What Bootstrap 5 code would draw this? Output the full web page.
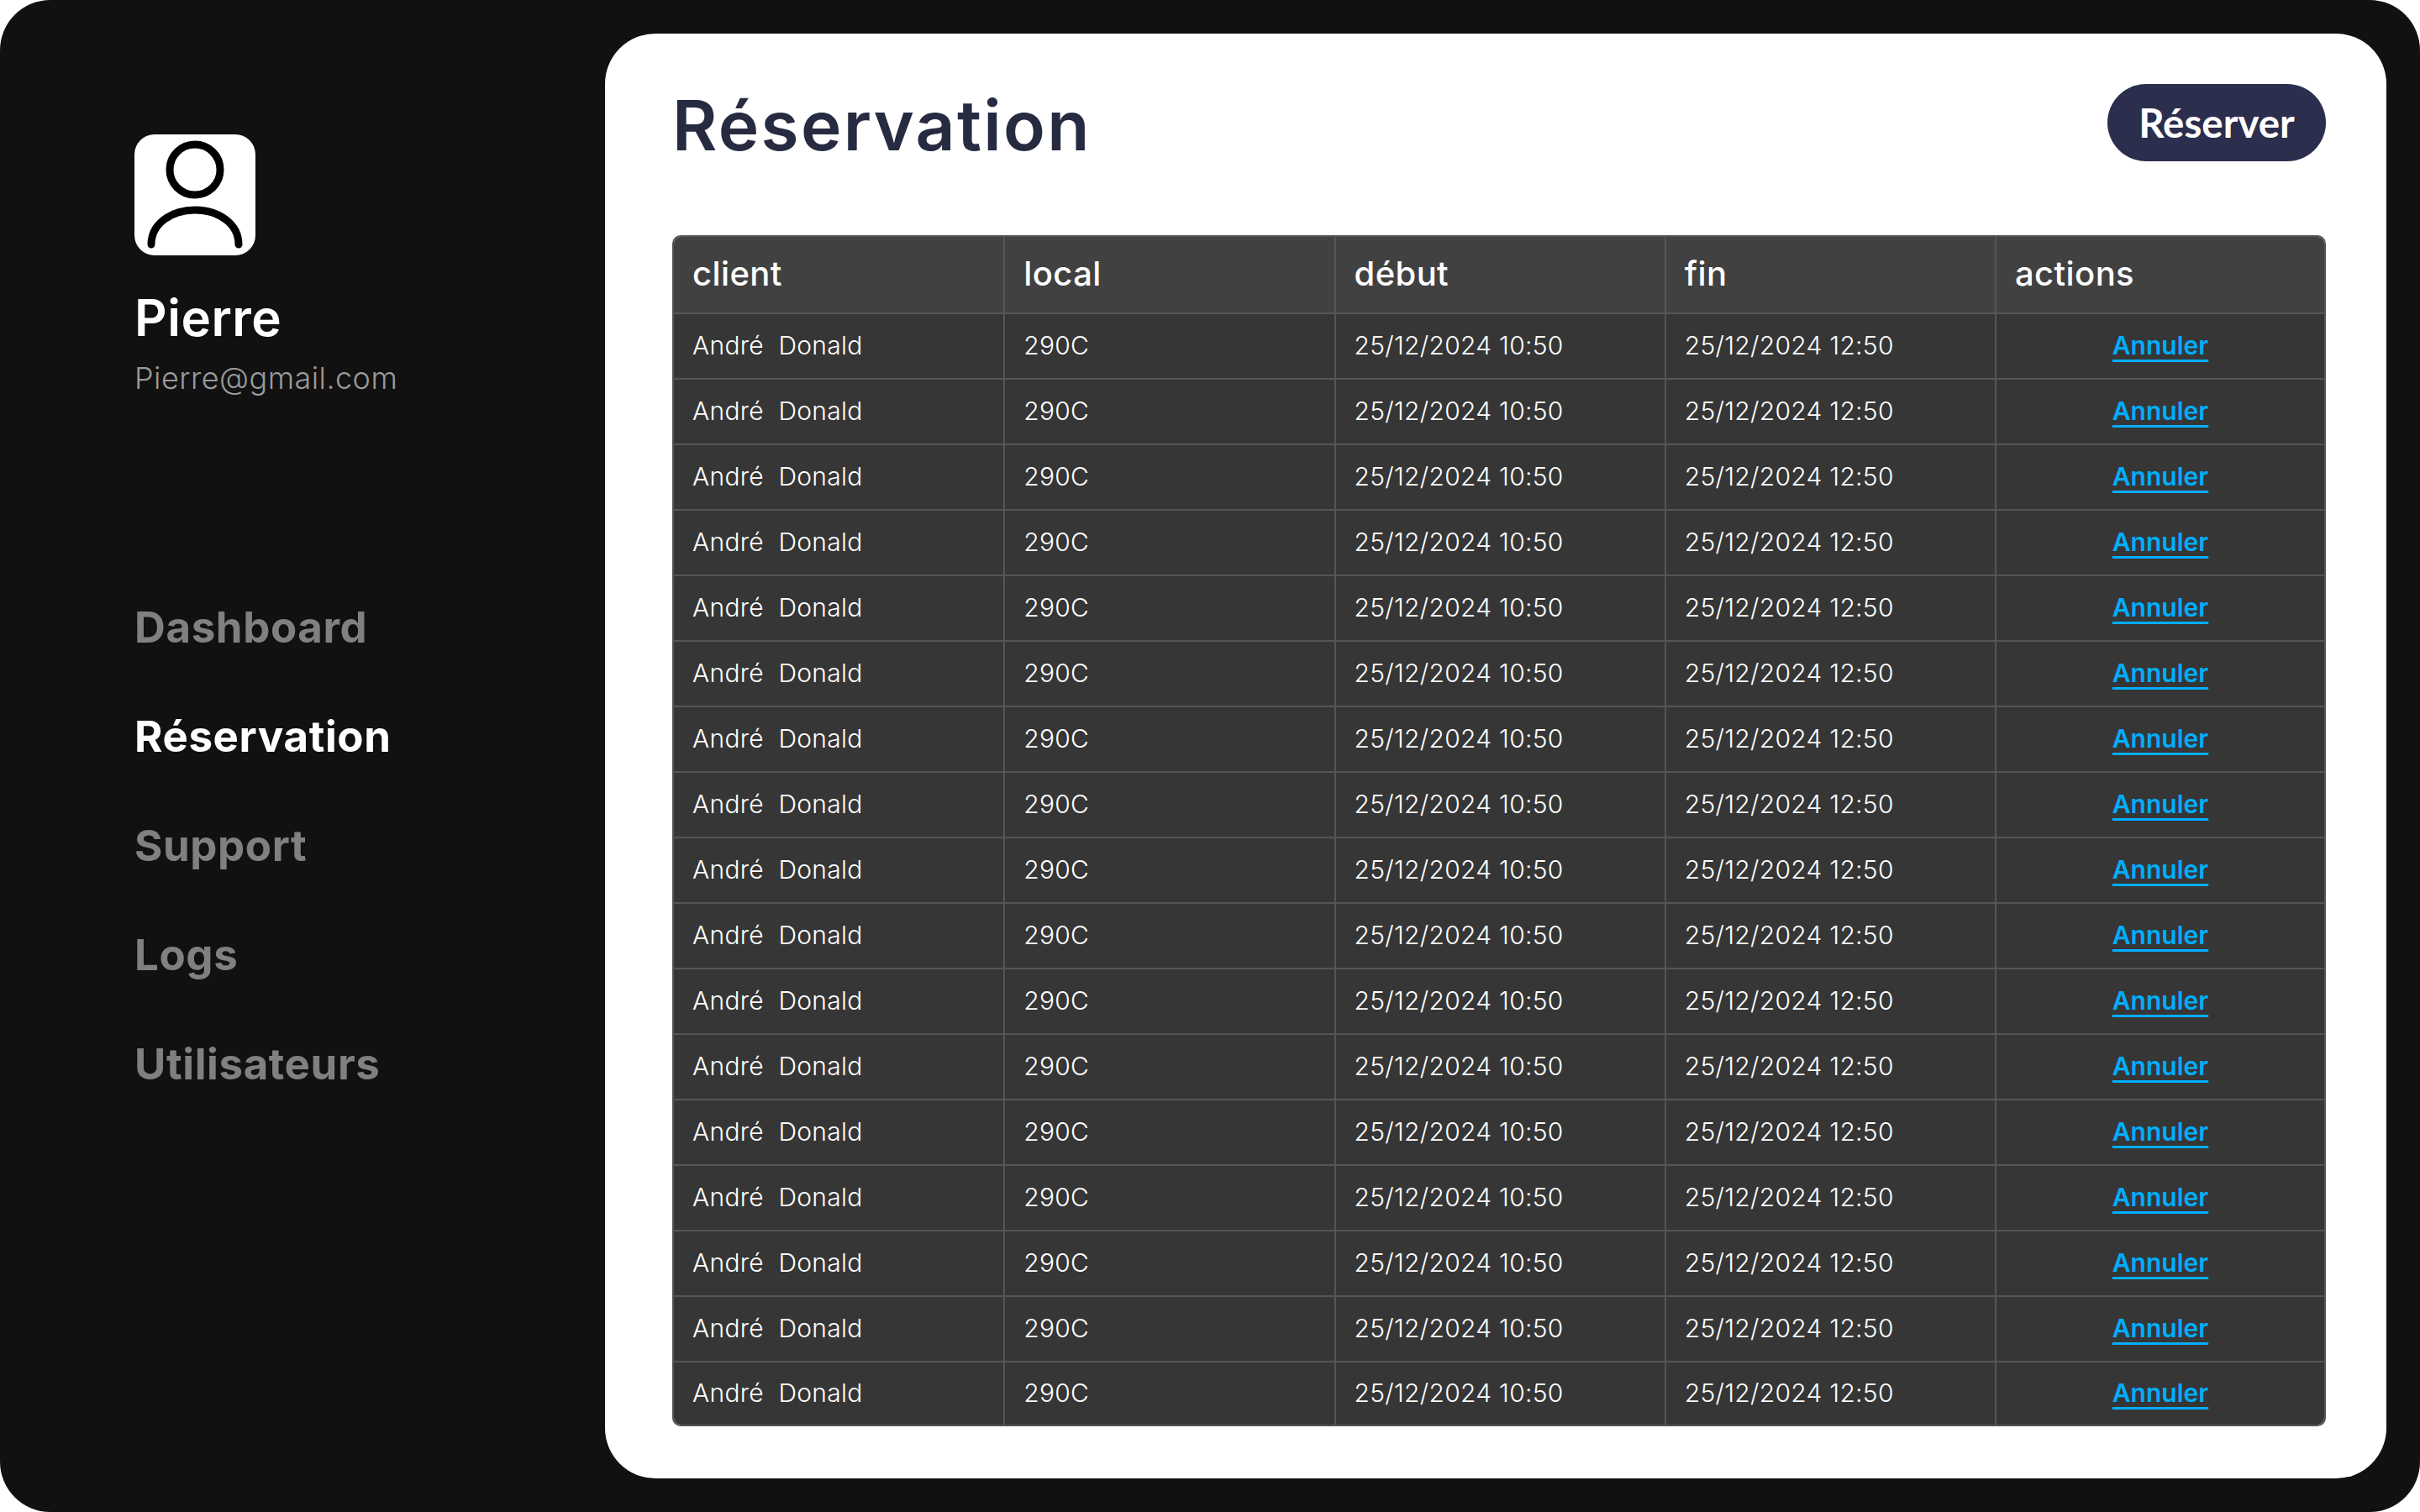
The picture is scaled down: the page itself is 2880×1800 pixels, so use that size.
<!DOCTYPE html>
<html lang="fr">
<head>
    <meta charset="UTF-8">
    <meta name="viewport" content="width=device-width, initial-scale=1.0">
    <title>Réservation</title>
    <link href="https://cdn.jsdelivr.net/npm/bootstrap@5.3.0/dist/css/bootstrap.min.css" rel="stylesheet">
    <style>
        body {
            background: #fff;
            font-family: "Inter", sans-serif;
        }
        .app-frame {
            background: #111;
            border-radius: 60px;
            height: 1800px;
        }
        .side-panel {
            width: 720px;
            padding: 160px 0 0 160px;
        }
        .avatar-box {
            width: 144px;
            height: 144px;
            background: #fff;
            border-radius: 24px;
        }
        .user-name {
            font-size: 60px;
            font-weight: 600;
            letter-spacing: .5px;
            line-height: 70px;
            color: #fff;
            margin: 39px 0 0;
        }
        .user-mail {
            font-size: 36px;
            font-weight: 300;
            letter-spacing: .45px;
            line-height: 44px;
            color: #9a9a9a;
            margin: 15px 0 0;
        }
        .side-nav {
            margin-top: 240px;
            gap: 60px;
        }
        .side-nav .nav-link {
            padding: 0;
            font-size: 51px;
            line-height: 70px;
            font-weight: 700;
            letter-spacing: .6px;
            color: #808080;
        }
        .side-nav .nav-link.active {
            color: #fff;
        }
        .main-panel {
            width: 2120px;
            height: 1720px;
            margin-top: 40px;
            background: #fff;
            border-radius: 60px;
            padding: 60px 72px 0 80px;
        }
        .page-title {
            font-size: 82px;
            font-weight: 600;
            letter-spacing: 2.3px;
            line-height: 100px;
            color: #272b42;
            margin: 0;
        }
        .btn-reserver {
            width: 260px;
            height: 92px;
            border: 0;
            border-radius: 46px;
            background: #2b2e4d;
            color: #fff;
            font-family: "Lato", sans-serif;
            font-weight: 700;
            font-size: 47.5px;
            line-height: 92px;
            padding: 0;
        }
        .table-box {
            margin-top: 80px;
            border: 2px solid #555;
            border-radius: 10px;
            overflow: hidden;
        }
        .table.resa-table {
            table-layout: fixed;
            margin: 0;
            --bs-table-bg: #363636;
            --bs-table-color: #fff;
            --bs-table-border-color: #555;
        }
        .table.resa-table > :not(caption) > * > * {
            border-width: 0 2px 2px 0;
            border-style: solid;
            padding: 0 22px 2px;
            height: 78px;
            vertical-align: middle;
            font-size: 30px;
            font-weight: 350;
            letter-spacing: .28px;
        }
        .table.resa-table > :not(caption) > * > *:last-child {
            border-right-width: 0;
        }
        .table.resa-table > tbody > tr:last-child > * {
            border-bottom-width: 0;
            height: 75px;
        }
        .table.resa-table > thead > tr > th {
            --bs-table-bg: #414141;
            height: 91px;
            font-size: 40px;
            font-weight: 550;
            letter-spacing: .4px;
        }
        .table.resa-table > thead > tr > th:last-child {
            width: 391px;
        }
        .table.resa-table .cancel-link {
            color: #00aeff;
            font-weight: 600;
            letter-spacing: 0;
            text-underline-offset: 6px;
        }
    </style>
</head>
<body class="m-0">
    <div class="app-frame d-flex">
        <aside class="side-panel flex-shrink-0">
            <div class="avatar-box">
                <svg width="144" height="144" viewBox="0 0 144 144" fill="none" stroke="#000" stroke-width="9" stroke-linecap="round">
                    <ellipse cx="72" cy="42" rx="30" ry="30"/>
                    <path d="M20 131C20 107 43 90 72 90C101 90 124 107 124 131"/>
                </svg>
            </div>
            <p class="user-name">Pierre</p>
            <p class="user-mail">Pierre@gmail.com</p>
            <nav class="nav flex-column side-nav">
                <a class="nav-link" href="#">Dashboard</a>
                <a class="nav-link active" href="#">Réservation</a>
                <a class="nav-link" href="#">Support</a>
                <a class="nav-link" href="#">Logs</a>
                <a class="nav-link" href="#">Utilisateurs</a>
            </nav>
        </aside>
        <main class="main-panel">
            <div class="d-flex justify-content-between align-items-start">
                <h1 class="page-title">Réservation</h1>
                <button class="btn btn-reserver" type="button">Réserver</button>
            </div>
            <div class="table-box">
                <table class="table resa-table">
                    <thead>
                        <tr><th>client</th><th>local</th><th>début</th><th>fin</th><th>actions</th></tr>
                    </thead>
                    <tbody id="resaRows"></tbody>
                </table>
            </div>
        </main>
    </div>

    <script>
        // 17 identical rows
        const rows = document.getElementById("resaRows");
        for (let i = 0; i < 17; i++) {
            rows.innerHTML += `
                <tr>
                    <td>André&nbsp; Donald</td>
                    <td>290C</td>
                    <td>25/12/2024 10:50</td>
                    <td>25/12/2024 12:50</td>
                    <td class="text-center"><a class="cancel-link" href="#">Annuler</a></td>
                </tr>`;
        }
    </script>
    <script src="https://cdn.jsdelivr.net/npm/bootstrap@5.3.0/dist/js/bootstrap.bundle.min.js"></script>
</body>
</html>
